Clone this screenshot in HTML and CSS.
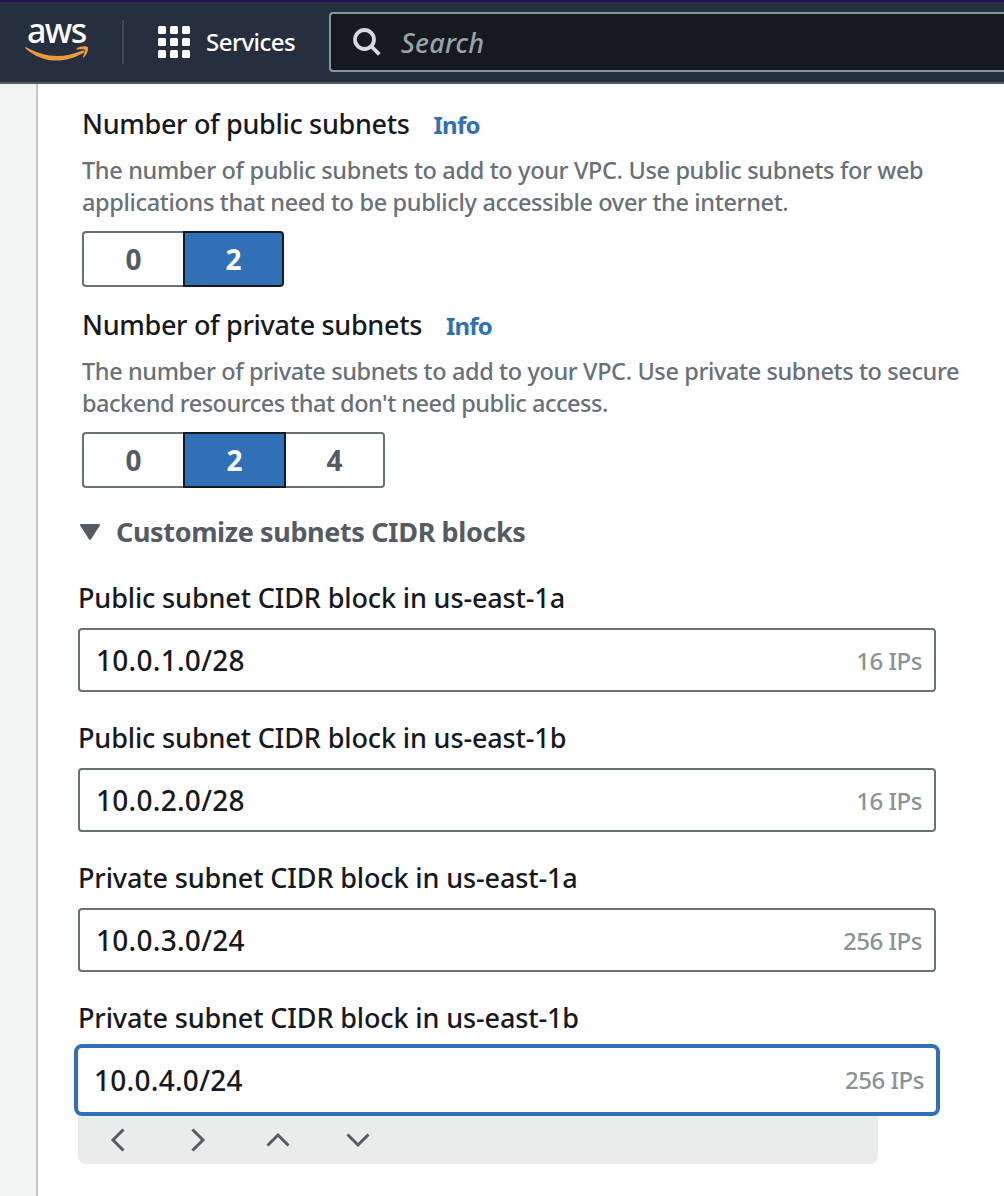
FILE: index.html
```html
<!DOCTYPE html>
<html lang="en">
<head>
<meta charset="utf-8">
<title>Create VPC</title>
<link rel="stylesheet" href="styles.css">
</head>
<body>
<header class="topbar">
  <div class="logo">
    <span class="logo-word">aws</span>
    <svg class="smile" width="64" height="16" viewBox="0 0 64 16" fill="#ec9a3c">
      <path d="M.4 2.200C-.4 1.500 .2 .8 1.200 1.300C20 11.700 37 12.700 57 4.800C59 4 60.200 5.800 58.600 6.800C40 18 17.500 17.700 .4 2.200Z"/>
      <path d="M51.500 2.600C54.500 .1 61.500 -.3 62.700 1C63.900 2.500 62.300 8.600 59 11.300C58.300 11.900 57.600 11.600 57.900 10.900C58.900 8.500 60.400 5 59.600 4C58.800 3 54.900 3.300 52.300 3.600C51.400 3.700 51 3.100 51.500 2.600Z"/>
    </svg>
  </div>
  <span class="divider"></span>
  <div class="services">
    <svg width="32" height="32" viewBox="0 0 32 32" fill="#fff">
      <rect width="8" height="8" rx="1.500"/><rect x="12" width="8" height="8" rx="1.500"/><rect x="24" width="8" height="8" rx="1.500"/>
      <rect y="12" width="8" height="8" rx="1.500"/><rect x="12" y="12" width="8" height="8" rx="1.500"/><rect x="24" y="12" width="8" height="8" rx="1.500"/>
      <rect y="24" width="8" height="8" rx="1.500"/><rect x="12" y="24" width="8" height="8" rx="1.500"/><rect x="24" y="24" width="8" height="8" rx="1.500"/>
    </svg>
    <span>Services</span>
  </div>
  <div class="search">
    <svg width="28" height="28" viewBox="0 0 28 28" fill="none" stroke="#d5dbdb" stroke-width="3.800">
      <circle cx="11.500" cy="11.500" r="9.500"/><path d="M18 18L26.300 26.300"/>
    </svg>
    <span>Search</span>
  </div>
</header>
<div class="page">
  <aside class="rail"></aside>
  <main class="content">
    <section class="group">
      <h3 class="title"><span class="title-text">Number of public subnets</span><a class="info">Info</a></h3>
      <p class="desc">The number of public subnets to add to your VPC. Use public subnets for web<br>applications that need to be publicly accessible over the internet.</p>
      <div class="segments"><button class="seg">0</button><button class="seg on">2</button></div>
    </section>
    <section class="group">
      <h3 class="title"><span class="title-text">Number of private subnets</span><a class="info">Info</a></h3>
      <p class="desc private">The number of private subnets to add to your VPC. Use private subnets to secure<br><span class="tight">backend resources that don't need public access.</span></p>
      <div class="segments"><button class="seg">0</button><button class="seg on mid">2</button><button class="seg">4</button></div>
    </section>
    <div class="expander">
      <svg width="20" height="16" viewBox="0 0 20 16"><path d="M1 1H19L10 15Z" fill="#545b64" stroke="#545b64" stroke-width="2" stroke-linejoin="round"/></svg>
      <span>Customize subnets CIDR blocks</span>
    </div>
    <div class="fields">
      <div class="field"><label>Public subnet CIDR block in us-east-1a</label><div class="input"><span>10.0.1.0/28</span><span class="ips">16 IPs</span></div></div>
      <div class="field"><label>Public subnet CIDR block in us-east-1b</label><div class="input"><span>10.0.2.0/28</span><span class="ips">16 IPs</span></div></div>
      <div class="field"><label>Private subnet CIDR block in us-east-1a</label><div class="input"><span>10.0.3.0/24</span><span class="ips">256 IPs</span></div></div>
      <div class="field"><label>Private subnet CIDR block in us-east-1b</label><div class="input focus"><span>10.0.4.0/24</span><span class="ips">256 IPs</span></div></div>
      <div class="stepper">
        <svg viewBox="0 0 24 24"><path d="M17.500 1.500L7 12L17.500 22.500"/></svg>
        <svg viewBox="0 0 24 24"><path d="M6.500 1.500L17 12L6.500 22.500"/></svg>
        <svg viewBox="0 0 24 24"><path d="M1.500 17.500L12 7L22.500 17.500"/></svg>
        <svg viewBox="0 0 24 24"><path d="M1.500 6.500L12 17L22.500 6.500"/></svg>
      </div>
    </div>
  </main>
</div>
</body>
</html>
```
FILE: styles.css
```css
* { box-sizing: border-box; }
body { margin: 0; background: #fff; color: #16191f; font-family: "Noto Sans", sans-serif; font-size: 27px; font-weight: 500; overflow: hidden; }

.topbar { display: flex; align-items: flex-start; height: 84px; background: #252f3e; border-top: 2px solid #23104f; border-bottom: 2px solid #545b64; color: #fff; }
.logo { display: flex; flex-direction: column; width: 64px; margin: 10px 0 0 25px; }
.logo-word { height: 34px; padding-left: 2px; font-size: 34px; line-height: 37px; font-weight: 500; letter-spacing: -1.6px; }
.smile { display: block; }
.divider { width: 2px; height: 44px; margin: 18px 0 0 33px; background: #414a57; }
.services { display: flex; align-items: center; gap: 16px; width: 171px; height: 32px; margin: 24px 0 0 34px; font-size: 24px; letter-spacing: -.55px; white-space: nowrap; }
.services span { padding-bottom: 1px; }
.search { display: flex; flex: 1; align-items: center; gap: 20px; height: 60px; margin-top: 10px; padding-left: 22px; background: #16191f; border: 2px solid #879596; border-right: 0; border-radius: 4px 0 0 4px; color: #95a5a6; font-style: italic; letter-spacing: .2px; }

.page { display: flex; height: 1112px; }
.rail { width: 38px; flex: none; background: #f2f3f3; border-right: 2px solid #c6c9c9; }
.content { flex: 1; padding: 18px 0 0 44px; }

.group { display: flex; flex-direction: column; height: 201px; }
.title { display: flex; align-items: center; height: 44px; margin: 0; font-size: 27px; font-weight: 500; line-height: 44px; gap: 24px; }
.title-text { letter-spacing: -.32px; }
.info { color: #2f70b7; font-size: 24px; font-weight: 700; letter-spacing: -.8px; padding-top: 2px; }
.desc { margin: 8px 0 13px; color: #687078; font-size: 23.5px; line-height: 32px; letter-spacing: -.345px; white-space: nowrap; }
.desc.private { letter-spacing: -.38px; }
.tight { letter-spacing: -.49px; }

.segments { display: flex; height: 56px; }
.seg { width: 101px; padding: 0; border: 2px solid #687078; background: #fff; color: #545b64; font: 700 28px "Noto Sans", sans-serif; }
.seg:first-child { border-radius: 4px 0 0 4px; border-right: 0; }
.seg:last-child { border-radius: 0 4px 4px 0; }
.seg:nth-child(3) { width: 99px; border-left: 0; }
.seg.on { background: #2f70b7; border-color: #16191f; color: #fff; }
.seg.mid { width: 103px; }

.expander { display: flex; align-items: center; gap: 16px; height: 48px; margin: 4px 0 0 -2px; color: #545b64; font-weight: 700; letter-spacing: -.38px; }
.expander span { padding-bottom: 2px; }
.fields { margin: 20px 0 0 -4px; width: 858px; }
.field { height: 140px; }
.field:nth-child(4) { height: 132px; }
.field label { display: block; height: 52px; line-height: 44px; letter-spacing: -.13px; white-space: nowrap; }
.input { display: flex; align-items: center; justify-content: space-between; height: 64px; padding: 0 12px 0 16px; background: #fff; border: 2px solid #687078; border-radius: 4px; font-size: 28px; letter-spacing: .28px; }
.ips { color: #879596; font-size: 24px; font-weight: 500; letter-spacing: -.45px; padding-top: 1px; }
.input.focus { height: 72px; margin: -4px -4px 0; padding: 0 12px 0 16px; border: 4px solid #2f70b7; border-radius: 8px; }
.focus .ips { padding: 0 0 2px; }
.stepper { display: flex; align-items: center; gap: 56px; width: 800px; height: 48px; margin-top: -12px; padding-left: 28px; background: #eaeceb; border-radius: 0 0 8px 8px; }
.stepper svg { width: 24px; height: 24px; fill: none; stroke: #545b64; stroke-width: 3; }
```
